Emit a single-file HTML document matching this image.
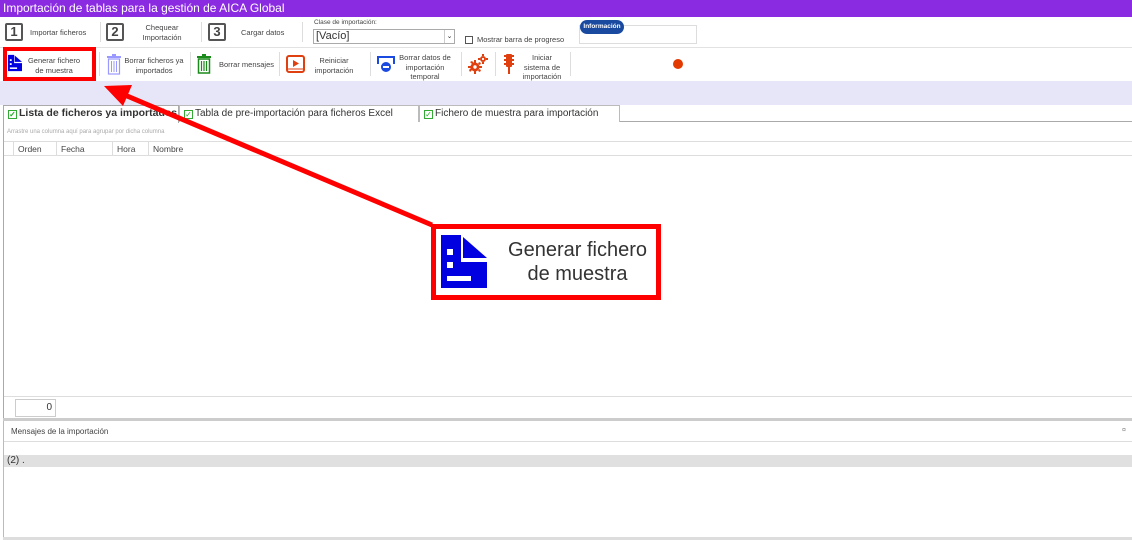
<!DOCTYPE html>
<html><head><meta charset="utf-8"><style>
*{margin:0;padding:0;box-sizing:border-box}
body{width:1132px;height:540px;position:relative;background:#fff;font-family:"Liberation Sans",sans-serif;overflow:hidden;color:#333}
.a{position:absolute}
.s{font-size:7.5px;text-align:center;line-height:9.5px;color:#444;white-space:nowrap}
.num{position:absolute;width:18px;height:18px;border:2px solid #555;border-radius:2px;font-size:13px;font-weight:bold;text-align:center;line-height:14px;color:#444}
.sep{position:absolute;width:1px;background:#ddd}
.tab{position:absolute;top:105px;height:17px;border:1px solid #bbb;border-bottom:none;font-size:10px;line-height:15px;padding-left:4px;background:#fff;color:#333;white-space:nowrap;overflow:hidden}
.cb{display:inline-block;width:9px;height:9px;border:1px solid #3a3;margin-right:2px;vertical-align:-1px;font-size:8px;line-height:7px;color:#2a2;text-align:center}
</style></head><body>
<div class="a" style="left:0;top:0;width:1132px;height:17px;background:#8a2be2;color:#fff;font-size:12px;line-height:16px;padding-left:3px">Importación de tablas para la gestión de AICA Global</div>
<div class="num" style="left:5px;top:23px">1</div>
<div class="a s" style="left:30px;top:28px">Importar ficheros</div>
<div class="sep" style="left:100px;top:22px;height:20px"></div>
<div class="num" style="left:106px;top:23px">2</div>
<div class="a s" style="left:132px;top:23px;width:60px">Chequear<br>Importación</div>
<div class="sep" style="left:201px;top:22px;height:20px"></div>
<div class="num" style="left:208px;top:23px">3</div>
<div class="a s" style="left:241px;top:28px">Cargar datos</div>
<div class="sep" style="left:302px;top:22px;height:20px"></div>
<div class="a" style="left:314px;top:19px;font-size:6.5px;color:#444">Clase de importación:</div>
<div class="a" style="left:313px;top:29px;width:142px;height:15px;border:1px solid #aaa;font-size:11px;line-height:13px;padding-left:2px">[Vacío]<span style="position:absolute;right:0;top:0;width:10px;height:13px;border-left:1px solid #ccc;font-size:7px;text-align:center">⌄</span></div>
<div class="a" style="left:465px;top:36px;width:8px;height:8px;border:1px solid #555"></div>
<div class="a" style="left:477px;top:35px;font-size:7.5px;color:#444">Mostrar barra de progreso</div>
<div class="a" style="left:579px;top:25px;width:118px;height:19px;border:1px solid #ddd"></div>
<div class="a" style="left:580px;top:20px;width:44px;height:14px;background:#1a4aa0;border-radius:7px;color:#fff;font-size:6.5px;font-weight:bold;text-align:center;line-height:14px">Información</div>
<div class="a" style="left:0;top:47px;width:1132px;height:1px;background:#e2e2e2"></div>
<!-- toolbar -->
<div class="a" style="left:3px;top:47px;width:93px;height:34px;border:4px solid #f00"></div>
<svg class="a" style="left:8px;top:53px" width="14" height="20" viewBox="0 0 46 53"><path d="M0 0H20V27H46V53H0Z" fill="#0000e0"/><path d="M22 2V23H46Z" fill="#0000e0"/><rect x="6" y="14" width="6" height="6" fill="#fff"/><rect x="6" y="27" width="6" height="6" fill="#fff"/><rect x="6" y="41" width="24" height="5" fill="#fff"/></svg>
<div class="a s" style="left:24px;top:56px;width:60px">Generar fichero<br>de muestra</div>
<div class="sep" style="left:99px;top:52px;height:24px"></div>
<svg class="a" style="left:106px;top:53px" width="16" height="22" viewBox="0 0 16 22"><rect x="1" y="3" width="14" height="2" fill="#99f"/><rect x="6" y="1" width="4" height="2" fill="#99f"/><rect x="2.5" y="6" width="11" height="15" fill="none" stroke="#99f" stroke-width="1.2"/><path d="M5.5 8v11M8 8v11M10.5 8v11" stroke="#99f"/></svg>
<div class="a s" style="left:124px;top:56px;width:60px">Borrar ficheros ya<br>importados</div>
<div class="sep" style="left:190px;top:52px;height:24px"></div>
<svg class="a" style="left:196px;top:54px" width="16" height="20" viewBox="0 0 16 20"><rect x="1" y="2" width="14" height="2" fill="#1a8a1a"/><rect x="6" y="0" width="4" height="2" fill="#1a8a1a"/><rect x="2.5" y="5" width="11" height="14" fill="none" stroke="#1a8a1a" stroke-width="1.5"/><path d="M5.5 7v10M8 7v10M10.5 7v10" stroke="#1a8a1a" stroke-width="1.2"/></svg>
<div class="a s" style="left:219px;top:60px">Borrar mensajes</div>
<div class="sep" style="left:279px;top:52px;height:24px"></div>
<svg class="a" style="left:286px;top:55px" width="19" height="18" viewBox="0 0 19 18"><rect x="1" y="1" width="17" height="16" rx="2" fill="none" stroke="#e04010" stroke-width="2"/><path d="M7 5v7l6-3.5z" fill="#e04010"/><path d="M1 14h17" stroke="#e04010"/></svg>
<div class="a s" style="left:308px;top:56px;width:52px">Reiniciar<br>importación</div>
<div class="sep" style="left:370px;top:52px;height:24px"></div>
<svg class="a" style="left:376px;top:55px" width="20" height="18" viewBox="0 0 20 18"><path d="M2 9V2h16v7" fill="none" stroke="#1a4ae0" stroke-width="2"/><circle cx="10" cy="12" r="5" fill="#1a4ae0"/><rect x="7" y="11" width="6" height="2" fill="#fff"/></svg>
<div class="a s" style="left:398px;top:53px;width:54px">Borrar datos de<br>importación<br>temporal</div>
<div class="sep" style="left:461px;top:52px;height:24px"></div>
<svg class="a" style="left:468px;top:54px" width="20" height="20" viewBox="0 0 20 20"><g fill="#e04010"><circle cx="7" cy="13" r="4.5"/><path d="M6 6h2v3H6zM6 17h2v3H6zM0 12h3v2H0zM11 12h3v2h-3zM2 8l2-1 2 2-1 2zM10 16l2-1 1 2-2 1zM2 18l-1-2 2-2 2 1zM10 10l1-2 2 1-1 2z"/><circle cx="15" cy="5" r="3"/><path d="M14 0h2v2h-2zM14 8h2v2h-2zM10 4h2v2h-2zM18 4h2v2h-2z"/></g><circle cx="7" cy="13" r="1.7" fill="#fff"/><circle cx="15" cy="5" r="1.1" fill="#fff"/></svg>
<div class="sep" style="left:495px;top:52px;height:24px"></div>
<svg class="a" style="left:503px;top:53px" width="12" height="22" viewBox="0 0 12 22"><rect x="3" y="1" width="6" height="13" rx="1" fill="#e04010"/><path d="M1 3h2M1 7h2M1 11h2M9 3h2M9 7h2M9 11h2" stroke="#e04010" stroke-width="2"/><rect x="5" y="14" width="2" height="7" fill="#e04010"/></svg>
<div class="a s" style="left:518px;top:53px;width:48px">Iniciar<br>sistema de<br>importación</div>
<div class="sep" style="left:570px;top:52px;height:24px"></div>
<div class="a" style="left:673px;top:59px;width:10px;height:10px;border-radius:50%;background:#e23a00"></div>
<div class="a" style="left:0;top:81px;width:1132px;height:24px;background:#e6e6f8"></div>
<!-- tabs -->
<div class="a" style="left:3px;top:121px;width:1129px;height:1px;background:#aaa"></div>
<div class="tab" style="left:3px;width:176px;height:18px;font-weight:bold;border-color:#aaa;font-size:10.5px"><span class="cb">✓</span>Lista de ficheros ya importados</div>
<div class="tab" style="left:179px;width:240px"><span class="cb">✓</span>Tabla de pre-importación para ficheros Excel</div>
<div class="tab" style="left:419px;width:201px"><span class="cb">✓</span>Fichero de muestra para importación</div>
<div class="a" style="left:3px;top:122px;width:1px;height:297px;background:#aaa"></div>
<div class="a" style="left:7px;top:129px;font-size:6px;color:#aaa;white-space:nowrap">Arrastre una columna aquí para agrupar por dicha columna</div>
<div class="a" style="left:4px;top:141px;width:1128px;height:15px;border-top:1px solid #ddd;border-bottom:1px solid #ddd;font-size:8.5px;line-height:14px;color:#444">
<span class="a" style="left:9px;top:0;height:14px;border-left:1px solid #ddd;padding-left:4px;width:43px">Orden</span>
<span class="a" style="left:52px;top:0;height:14px;border-left:1px solid #ddd;padding-left:4px;width:56px">Fecha</span>
<span class="a" style="left:108px;top:0;height:14px;border-left:1px solid #ddd;padding-left:4px;width:36px">Hora</span>
<span class="a" style="left:144px;top:0;height:14px;border-left:1px solid #ddd;padding-left:4px">Nombre</span></div>
<div class="a" style="left:4px;top:396px;width:1128px;height:1px;background:#ddd"></div>
<div class="a" style="left:15px;top:399px;width:41px;height:18px;border:1px solid #ccc;font-size:10px;text-align:right;line-height:16px;padding-right:3px">0</div>
<div class="a" style="left:3px;top:418px;width:1129px;height:3px;background:#ccc"></div>
<div class="a" style="left:3px;top:421px;width:1px;height:119px;background:#bbb"></div>
<div class="a" style="left:11px;top:427px;font-size:8px;color:#444">Mensajes de la importación</div>
<div class="a" style="left:1122px;top:427px;font-size:7px;color:#888">¤</div>
<div class="a" style="left:4px;top:441px;width:1128px;height:1px;background:#ddd"></div>
<div class="a" style="left:4px;top:455px;width:1128px;height:12px;background:#e0e0e0;font-size:10px;line-height:12px;padding-left:3px;color:#333">(2) .</div>
<div class="a" style="left:3px;top:537px;width:1129px;height:3px;background:#ddd"></div>
<!-- arrow -->
<svg class="a" style="left:0;top:0" width="1132" height="540"><path d="M432 225L120 93" stroke="#f00" stroke-width="5"/><path d="M104 86L132 85L123 106Z" fill="#f00"/></svg>
<!-- zoom callout -->
<div class="a" style="left:431px;top:224px;width:230px;height:76px;border:5px solid #f00;background:#fff"></div>
<svg class="a" style="left:441px;top:235px" width="46" height="53" viewBox="0 0 46 53"><path d="M0 0H20V27H46V53H0Z" fill="#0000e0"/><path d="M22 2V23H46Z" fill="#0000e0"/><rect x="6" y="14" width="6" height="6" fill="#fff"/><rect x="6" y="27" width="6" height="6" fill="#fff"/><rect x="6" y="41" width="24" height="5" fill="#fff"/></svg>
<div class="a" style="left:500px;top:238px;width:155px;text-align:center;font-size:20px;line-height:24px;color:#333">Generar fichero<br>de muestra</div>
</body></html>
